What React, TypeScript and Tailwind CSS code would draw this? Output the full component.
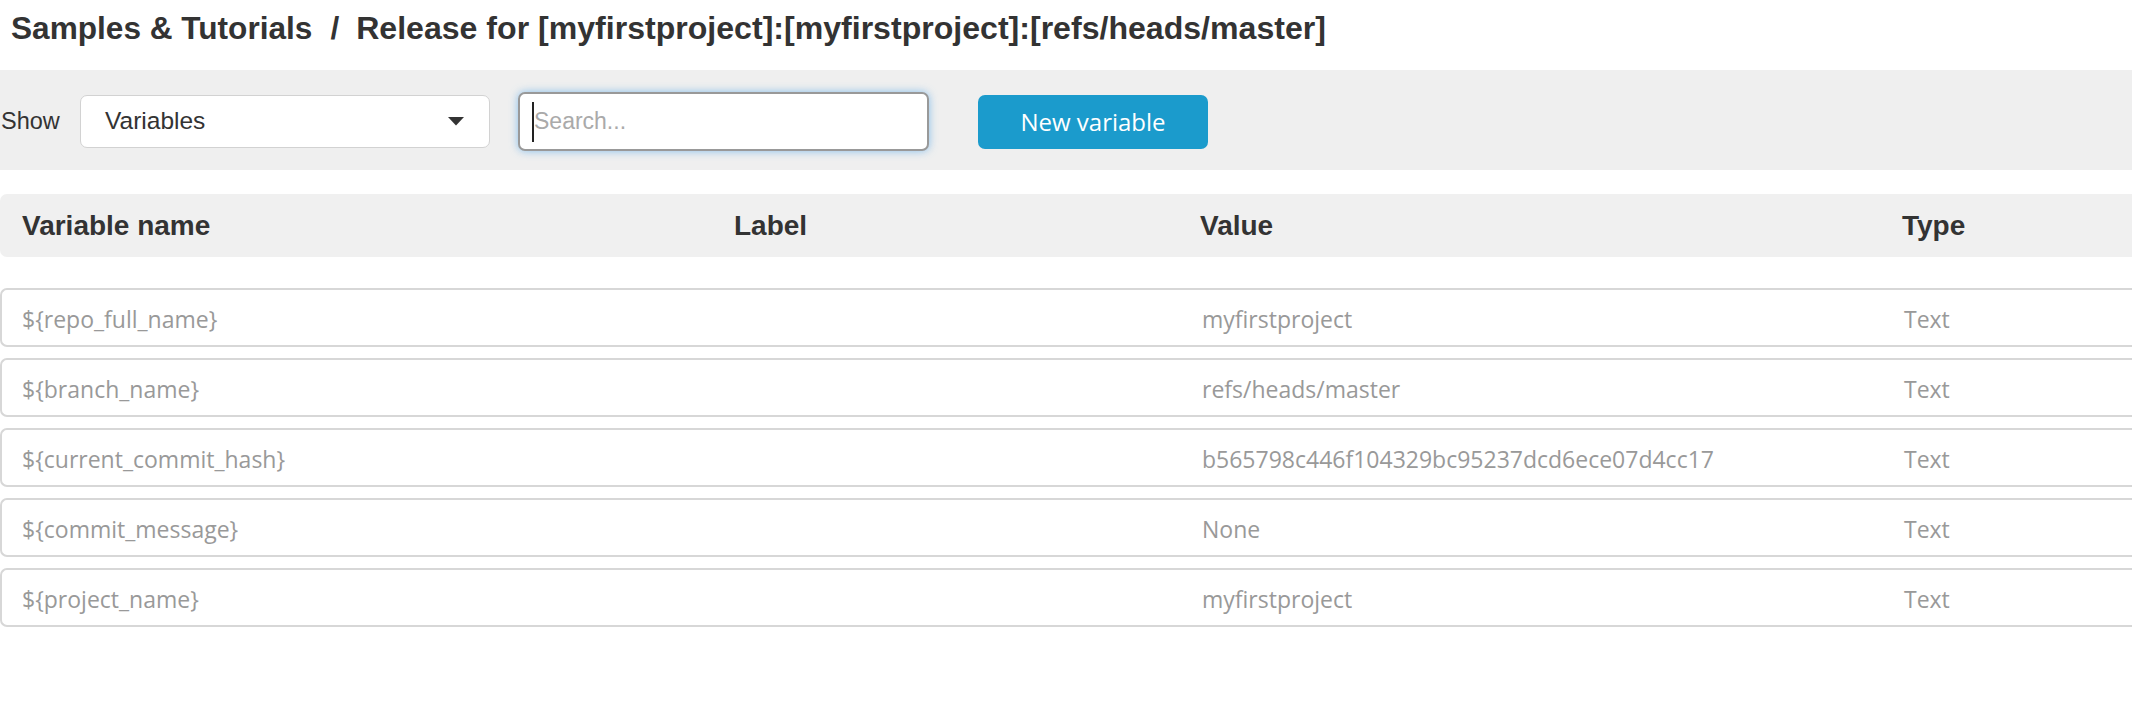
import React from "react";

const rows = [
  { name: "${repo_full_name}", label: "", value: "myfirstproject", type: "Text" },
  { name: "${branch_name}", label: "", value: "refs/heads/master", type: "Text" },
  { name: "${current_commit_hash}", label: "", value: "b565798c446f104329bc95237dcd6ece07d4cc17", type: "Text" },
  { name: "${commit_message}", label: "", value: "None", type: "Text" },
  { name: "${project_name}", label: "", value: "myfirstproject", type: "Text" },
];

export default function App() {
  return (
    <div className="w-full min-h-[726px] overflow-hidden bg-white">
      <div className="w-[2200px]">
        {/* Title */}
        <div className="flex items-baseline pt-[8px] pl-[11px] h-[70px] text-[#333] font-['Liberation_Sans',Arial,sans-serif] font-bold leading-[40px]">
          <span className="text-[31.6px]">Samples &amp; Tutorials</span>
          <span className="text-[31.6px] ml-[18px]">/</span>
          <span className="text-[32.1px] ml-[17px]">Release for [myfirstproject]:[myfirstproject]:[refs/heads/master]</span>
        </div>

        {/* Toolbar */}
        <div className="flex items-center h-[100px] pt-[3px] bg-[#efefef]">
          <span className="ml-[1px] w-[79px] text-[23.5px] text-[#333] font-['Liberation_Sans',Arial,sans-serif]">Show</span>
          <div className="flex items-center justify-between w-[410px] h-[53px] bg-white border-[1.5px] border-[#d2d2d2] rounded-[7px] pl-[24px] pr-[24px]">
            <span className="text-[24.5px] text-[#333] font-['Liberation_Sans',Arial,sans-serif]">Variables</span>
            <svg width="16" height="9" viewBox="0 0 16 9" className="mr-[1px]">
              <path d="M0 0 L16 0 L8 8.5 Z" fill="#333" />
            </svg>
          </div>
          <div className="ml-[28px] flex items-center w-[411px] h-[59px] bg-white border-2 border-[#999] rounded-[7px] pl-[12px] shadow-[0_0_9px_rgba(102,175,233,0.75)]">
            <span className="w-[2px] h-[40px] bg-[#222]" />
            <span className="text-[23px] text-[#aaa] font-['Liberation_Sans',Arial,sans-serif]">Search...</span>
          </div>
          <button className="ml-[49px] w-[230px] h-[54px] bg-[#1b9bcc] rounded-[7px] text-white text-[24px] font-['Open_Sans',sans-serif]">
            New variable
          </button>
        </div>

        {/* Table header */}
        <div className="mt-[24px] h-[63px] bg-[#f0f0f0] rounded-l-[7px] grid grid-cols-[712px_466px_702px_1fr] items-center pl-[22px] text-[28px] font-bold text-[#333] font-['Liberation_Sans',Arial,sans-serif]">
          <span>Variable name</span>
          <span>Label</span>
          <span>Value</span>
          <span>Type</span>
        </div>

        {/* Rows */}
        <div className="mt-[31px] flex flex-col gap-[11px]">
          {rows.map((r) => (
            <div
              key={r.name}
              className="h-[59px] border-y-2 border-l-2 border-[#d7d7d7] rounded-l-[7px] grid grid-cols-[712px_466px_702px_1fr] items-center pl-[20px] pt-[3px] text-[23px] text-[#999] font-['Open_Sans',sans-serif]"
            >
              <span>{r.name}</span>
              <span>{r.label}</span>
              <span className="pl-[2px]">{r.value}</span>
              <span className="pl-[2px]">{r.type}</span>
            </div>
          ))}
        </div>
      </div>
    </div>
  );
}
